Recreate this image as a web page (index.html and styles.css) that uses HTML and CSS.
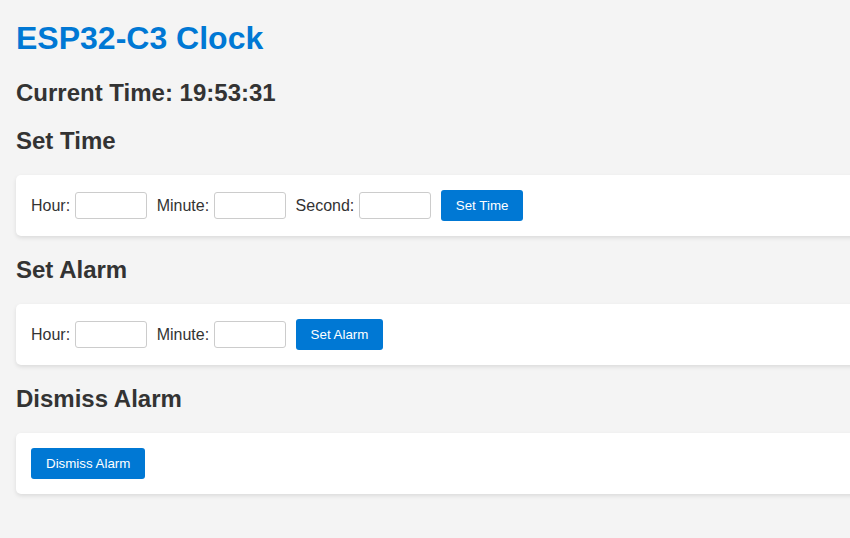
FILE: index.html
```html
<!DOCTYPE html>
<html lang="en">
<head>
<meta charset="utf-8">
<title>ESP32-C3 Clock</title>
<link rel="stylesheet" href="styles.css">
</head>
<body>
<main class="page">
  <h1 class="title">ESP32-C3 Clock</h1>
  <h2 class="heading">Current Time: <span id="time">19:53:31</span></h2>

  <h2 class="heading">Set Time</h2>
  <form class="card" onsubmit="return false">
    <label class="label" for="th">Hour:</label>
    <input class="field" id="th" type="number">
    <label class="label" for="tm">Minute:</label>
    <input class="field" id="tm" type="number">
    <label class="label" for="ts">Second:</label>
    <input class="field" id="ts" type="number">
    <button class="btn" type="submit">Set Time</button>
  </form>

  <h2 class="heading">Set Alarm</h2>
  <form class="card" onsubmit="return false">
    <label class="label" for="ah">Hour:</label>
    <input class="field" id="ah" type="number">
    <label class="label" for="am">Minute:</label>
    <input class="field" id="am" type="number">
    <button class="btn" type="submit">Set Alarm</button>
  </form>

  <h2 class="heading">Dismiss Alarm</h2>
  <form class="card" onsubmit="return false">
    <button class="btn" type="submit">Dismiss Alarm</button>
  </form>
</main>
</body>
</html>
```

FILE: styles.css
```css
html {
  overflow: hidden;
}

body {
  margin: 0;
  background: #f4f4f4;
  color: #333;
  font-family: "Liberation Sans", Arial, sans-serif;
}

.page {
  width: 900px;
  padding: 0 0 0 16px;
  display: flow-root;
}

.title {
  font-size: 32px;
  color: #0078d4;
  margin: 20px 0 22px;
}

.heading {
  font-size: 24px;
  margin: 20px 0;
}

.card {
  display: flex;
  align-items: center;
  background: #fff;
  padding: 15px;
  border-radius: 5px;
  box-shadow: 0 2px 4px rgba(0, 0, 0, 0.1);
  margin: 0 0 20px;
}

.label {
  font-size: 16px;
  margin-right: 4.5px;
}

.field {
  width: 60px;
  padding: 5px;
  border: 1px solid #ccc;
  border-radius: 3px;
  font-family: inherit;
  font-size: 13.33px;
  margin: 0 10px 0 0;
  background: #fff;
  -moz-appearance: textfield;
}

.field::-webkit-outer-spin-button,
.field::-webkit-inner-spin-button {
  -webkit-appearance: none;
  margin: 0;
}

.btn {
  background: #0078d4;
  color: #fff;
  border: none;
  border-radius: 3px;
  padding: 8px 15px;
  font-family: inherit;
  font-size: 13.33px;
  cursor: pointer;
}
```
